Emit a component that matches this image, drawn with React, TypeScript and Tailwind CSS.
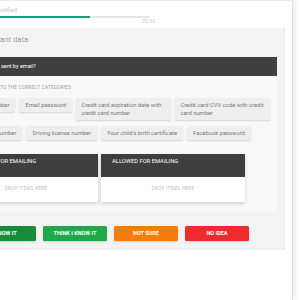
import React from "react";

const rowOne = [
  { t: "Credit card number", w: "" },
  { t: "Email password", w: "" },
  { t: "Credit card expiration date with credit card number", w: "w-[95px] px-[5px]" },
  { t: "Credit card CVV code with credit card number", w: "w-[95px] px-[5px]" },
];
const rowTwo = [
  "Bank account number",
  "Driving license number",
  "Your child's birth certificate",
  "Facebook password",
];

function Chip({ text, extra }: { text: string; extra?: string }) {
  return (
    <div
      className={`bg-[#eeeeee] rounded-[1.5px] shadow-[0_1px_2px_rgba(0,0,0,0.14)] py-[3px] text-[5.8px] leading-[8px] text-[#7a7a7a] ${
        extra && extra.length ? extra : "px-[6px] whitespace-nowrap"
      }`}
    >
      {text}
    </div>
  );
}

function Zone({ title, pl }: { title: string; pl: string }) {
  return (
    <div className="w-[144px] shadow-[0_2px_4px_rgba(0,0,0,0.16)]">
      <div className={`h-[23px] bg-[#3e3e3e] pt-[4px] ${pl} text-[5.8px] leading-[7px] text-white whitespace-nowrap`}>
        {title}
      </div>
      <div className="h-[25px] bg-white flex items-center justify-center text-[4.5px] tracking-[0.3px] text-[#bdbdbd]">
        DROP ITEMS HERE
      </div>
    </div>
  );
}

export default function App() {
  return (
    <div className="w-[300px] h-[300px] bg-white overflow-hidden font-[Roboto,'Liberation_Sans',sans-serif]">
      <div className="w-[293px] h-[300px] border-t border-t-[#ececec] border-r border-r-[#e0e0e0] shadow-[3px_0_4px_rgba(0,0,0,0.07)] overflow-hidden">
        {/* progress */}
        <div className="h-[27px] pt-[6px]">
          <div className="ml-[-8px] text-[6px] leading-[6px] text-[#c6c6c6] whitespace-nowrap">Identified</div>
          <div className="mt-[3px] w-[150px] h-[2px] bg-[#e6e6e6]">
            <div className="w-[90px] h-full bg-[#1c9d7b]" />
          </div>
          <div className="w-[155px] text-right text-[5px] leading-[6px] text-[#c6c6c6]">20/30</div>
        </div>

        {/* panel */}
        <div className="ml-[-60px] w-[345px] h-[222px] bg-[#f3f3f3] border-r border-r-[#e6e6e6] pl-[14px]">
          <div className="h-[29px] pt-[7px] pl-[23px] text-[7.8px] leading-[10px] font-light text-[#757575] whitespace-nowrap">
            Important data
          </div>
          <div className="w-[323px] h-[19px] bg-[#404040] flex items-center pl-[0.5px] text-[5.5px] text-white whitespace-nowrap">
            Which data can be sent by email?
          </div>
          <div className="w-[323px] h-[136px] bg-[#f8f8f8] pt-[9px]">
            <div className="pl-[11px] text-[4.5px] leading-[5px] tracking-[0.3px] text-[#9a9a9a] whitespace-nowrap">
              DRAG ITEMS INTO THE CORRECT CATEGORIES
            </div>
            <div className="mt-[8px] flex items-start gap-x-[4px]">
              {rowOne.map((c) => (
                <Chip key={c.t} text={c.t} extra={c.w} />
              ))}
            </div>
            <div className="mt-[6px] flex items-start gap-x-[4px]">
              {rowTwo.map((c) => (
                <Chip key={c} text={c} />
              ))}
            </div>
            <div className="mt-[14px] flex gap-x-[3px]">
              <Zone title="NOT ALLOWED FOR EMAILING" pl="pl-[3px]" />
              <Zone title="ALLOWED FOR EMAILING" pl="pl-[11px]" />
            </div>
          </div>
          <div className="mt-[14px] ml-[18px] flex gap-x-[7px]">
            <div className="w-[64px] h-[15px] rounded-[1.5px] bg-[#178d3a] flex items-center justify-center text-[5.5px] font-bold text-white shadow-[0_1px_2px_rgba(0,0,0,0.15)]">
              I KNOW IT
            </div>
            <div className="w-[64px] h-[15px] rounded-[1.5px] bg-[#20a84b] flex items-center justify-center text-[5.5px] font-bold text-white shadow-[0_1px_2px_rgba(0,0,0,0.15)]">
              THINK I KNOW IT
            </div>
            <div className="w-[64px] h-[15px] rounded-[1.5px] bg-[#f57d0c] flex items-center justify-center text-[5.5px] font-bold text-white shadow-[0_1px_2px_rgba(0,0,0,0.15)]">
              NOT SURE
            </div>
            <div className="w-[64px] h-[15px] rounded-[1.5px] bg-[#ec2b2e] flex items-center justify-center text-[5.5px] font-bold text-white shadow-[0_1px_2px_rgba(0,0,0,0.15)]">
              NO IDEA
            </div>
          </div>
        </div>
      </div>
    </div>
  );
}
